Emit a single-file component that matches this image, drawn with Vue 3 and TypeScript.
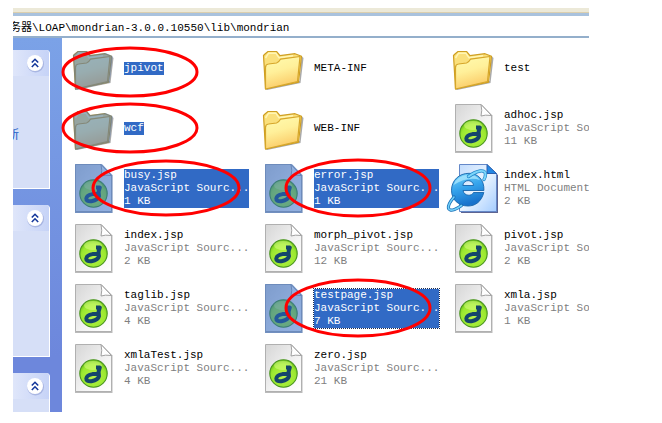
<script setup lang="ts">
type Kind = 'folder' | 'jsp' | 'html'

interface Entry {
  name: string
  kind: Kind
  type?: string
  size?: string
  selected?: boolean
  focused?: boolean
}

const path = '务器\\LOAP\\mondrian-3.0.0.10550\\lib\\mondrian'

const script = 'JavaScript Sourc...'

const entries: Entry[] = [
  { name: 'jpivot', kind: 'folder', selected: true },
  { name: 'META-INF', kind: 'folder' },
  { name: 'test', kind: 'folder' },
  { name: 'wcf', kind: 'folder', selected: true },
  { name: 'WEB-INF', kind: 'folder' },
  { name: 'adhoc.jsp', kind: 'jsp', type: script, size: '11 KB' },
  { name: 'busy.jsp', kind: 'jsp', type: script, size: '1 KB', selected: true },
  { name: 'error.jsp', kind: 'jsp', type: script, size: '1 KB', selected: true },
  { name: 'index.html', kind: 'html', type: 'HTML Document', size: '2 KB' },
  { name: 'index.jsp', kind: 'jsp', type: script, size: '2 KB' },
  { name: 'morph_pivot.jsp', kind: 'jsp', type: script, size: '12 KB' },
  { name: 'pivot.jsp', kind: 'jsp', type: script, size: '2 KB' },
  { name: 'taglib.jsp', kind: 'jsp', type: script, size: '4 KB' },
  { name: 'testpage.jsp', kind: 'jsp', type: script, size: '7 KB', selected: true, focused: true },
  { name: 'xmla.jsp', kind: 'jsp', type: script, size: '1 KB' },
  { name: 'xmlaTest.jsp', kind: 'jsp', type: script, size: '4 KB' },
  { name: 'zero.jsp', kind: 'jsp', type: script, size: '21 KB' },
]

const panels = [
  { id: 'tasks', link: '所' },
  { id: 'places', link: '' },
  { id: 'details', link: '' },
]

const marks = [
  { cx: 117, cy: 64, rx: 67, ry: 24 },
  { cx: 117, cy: 120, rx: 67, ry: 24 },
  { cx: 153, cy: 180, rx: 73, ry: 27 },
  { cx: 345, cy: 180, rx: 72, ry: 28 },
  { cx: 345, cy: 300, rx: 72, ry: 28 },
]
</script>

<template>
  <main class="explorer">
    <svg class="defs" aria-hidden="true">
      <defs>
        <linearGradient id="folderFront" x1="0" y1="0" x2="0.3" y2="1">
          <stop offset="0" stop-color="#fffbb0" />
          <stop offset="0.5" stop-color="#fff09a" />
          <stop offset="1" stop-color="#fbcc68" />
        </linearGradient>
        <linearGradient id="paper" x1="0" y1="0" x2="1" y2="1">
          <stop offset="0" stop-color="#d6d6d6" />
          <stop offset="0.6" stop-color="#f4f4f4" />
          <stop offset="1" stop-color="#ffffff" />
        </linearGradient>
        <radialGradient id="disc" cx="0.5" cy="0.6" r="0.55">
          <stop offset="0" stop-color="#b8f444" />
          <stop offset="0.8" stop-color="#9ae830" />
          <stop offset="1" stop-color="#74c820" />
        </radialGradient>
        <linearGradient id="bluePaper" x1="0" y1="0" x2="1" y2="1">
          <stop offset="0" stop-color="#c2dcfc" />
          <stop offset="0.5" stop-color="#eaf4ff" />
          <stop offset="1" stop-color="#a4ccff" />
        </linearGradient>
        <linearGradient id="globe" x1="0" y1="0" x2="0.3" y2="1">
          <stop offset="0" stop-color="#7cd6fa" />
          <stop offset="0.5" stop-color="#36a4ec" />
          <stop offset="1" stop-color="#1872cc" />
        </linearGradient>
      </defs>
    </svg>

    <div class="toolbar"></div>
    <input class="address" aria-label="Address" :value="path" spellcheck="false" />

    <div class="body">
      <aside class="sidebar">
        <section v-for="p in panels" :key="p.id" class="panel" :class="p.id">
          <header class="panel-head">
            <button class="collapse" type="button" aria-label="Collapse">
              <svg viewBox="0 0 20 20" width="20" height="20">
                <circle cx="10.500" cy="11" r="8.500" fill="#8f9fd4" opacity="0.6" />
                <circle cx="10" cy="10" r="8" fill="#fff" />
                <path d="M6.800 9.500 10 6.300l3.200 3.200M6.800 14 10 10.800l3.200 3.200" fill="none" stroke="#173a9c" stroke-width="1.600" />
              </svg>
            </button>
          </header>
          <a v-if="p.link" class="task" href="#">{{ p.link }}</a>
        </section>
      </aside>

      <ul class="files">
        <li
          v-for="e in entries"
          :key="e.name"
          class="file"
          :class="[e.kind, { selected: e.selected, focused: e.focused }]"
        >
          <svg v-if="e.kind === 'folder'" class="icon" viewBox="0 0 48 48">
            <path d="M6 44.500 8 46l33.500-7 3-25-2-2-2 25z" fill="#555" opacity="0.5" />
            <path d="M4.500 11.500 6 10 9 7.500h8.500l3.500 4.200 15-2 6.500 2.500-3 26L6.500 45z" fill="#fae07c" stroke="#cf9f22" stroke-width="1.200" stroke-linejoin="round" />
            <path d="M6.500 14 9.500 9.300h7.500l3 4.500 14-2" fill="none" stroke="#fff6b4" stroke-width="1.400" />
            <path d="M6.500 45V23.500q0-3.200 3-3.500l8-1q2-.5 4-3.800l19.500-2.700-2.500 25z" fill="url(#folderFront)" stroke="#d6a62a" stroke-width="1.200" stroke-linejoin="round" />
            <path v-if="e.selected" d="M4 11 9 7h9l3.500 4 15-2 7 3-3 26.500L6 46z" fill="#316ac5" opacity="0.5" />
          </svg>

          <svg v-else-if="e.kind === 'jsp'" class="icon" viewBox="0 0 48 48">
            <path d="M6 1h27L43.500 11.500V49H6z" fill="#777" opacity="0.5" />
            <path d="M6.500.5H32L42.500 11.500V47.500h-36z" fill="url(#paper)" stroke="#b0b0b0" />
            <path d="M32 .5q1.500 6 0 11.500 4-1.500 10.500-.5z" fill="#fff" stroke="#999" stroke-width="0.900" />
            <circle cx="24.500" cy="29.500" r="13.700" fill="url(#disc)" stroke="#4a9420" stroke-width="1.100" />
            <ellipse cx="24" cy="21.500" rx="9" ry="4.500" fill="#dcff86" opacity="0.5" />
            <path d="M27 23.500h3.800q-2 4.500-.8 8.500-.8 4-7.500 5.200-5.500.5-5.200-2.700.6-3.500 6.200-4.400 3.500-.2 6 0" fill="none" stroke="#14456b" stroke-width="4" stroke-linejoin="round" />
            <path v-if="e.selected" d="M6 0h27l10.500 11v38H6z" fill="#316ac5" opacity="0.53" />
          </svg>

          <svg v-else class="icon" viewBox="0 0 48 48">
            <path d="M12 2h27l10 9v38H12z" fill="#27306e" opacity="0.75" />
            <path d="M10.500.5H38L47.500 10v37.500h-37z" fill="url(#bluePaper)" stroke="#6488c8" />
            <path d="M38 .5V9.500h9.500z" fill="#2488e4" stroke="#2b5fae" />
            <path d="M34.800 28.500H24.500c-1.500 4-9.500 3.800-10.500-2H34.900C35.500 15.500 28.500 9.300 20 9.300 10 9.300 2.500 16.500 2.500 26.200c0 9.500 7 15.800 16.500 15.800 7.500 0 13.500-4.500 15.800-13.500zM13.800 21.500c.8-6.500 10-6.500 10.800 0z" fill="url(#globe)" stroke="#1764aa" stroke-width="0.900" fill-rule="evenodd" />
            <path d="M4.500 21Q8.500 11 19.500 10.800q7.500 0 11.500 5.200Q19 12 4.500 21z" fill="#b4ecff" opacity="0.7" />
            <path d="M5 33C-3.500 43-1.500 48 5.500 45.500Q9 44.200 12.500 41.500" fill="none" stroke="#1870b8" stroke-width="3.200" stroke-linecap="round" />
            <path d="M5 33C-3.500 43-1.500 48 5.500 45.500Q9 44.200 12.500 41.500" fill="none" stroke="#74d0f8" stroke-width="1.600" stroke-linecap="round" />
            <path d="M19.500 12.500C28 6.500 36.500 4.500 36.500 10.500Q36.500 13 35 15.500" fill="none" stroke="#2488cc" stroke-width="3.400" stroke-linecap="round" />
            <path d="M19.500 12.500C28 6.500 36.500 4.500 36.500 10.500Q36.500 13 35 15.500" fill="none" stroke="#7cd6fa" stroke-width="2" stroke-linecap="round" />
          </svg>

          <div class="label">
            <span class="name">{{ e.name }}</span>
            <span v-if="e.type" class="meta">{{ e.type }}</span>
            <span v-if="e.size" class="meta">{{ e.size }}</span>
          </div>
        </li>
      </ul>
    </div>

    <svg class="marks" width="576" height="404" aria-hidden="true">
      <ellipse v-for="(m, i) in marks" :key="i" :cx="m.cx" :cy="m.cy" :rx="m.rx" :ry="m.ry" />
    </svg>
  </main>
</template>

<style>
body {
  margin: 0;
  background: #fff;
}
</style>

<style scoped>
.explorer {
  position: relative;
  margin: 8px 73px 11px 13px;
  overflow: hidden;
  font-family: "Liberation Mono", "Noto Sans CJK SC", monospace;
  font-size: 11px;
  line-height: 13px;
  color: #000;
}

.defs {
  position: absolute;
  width: 0;
  height: 0;
}

.toolbar {
  height: 4px;
  background: #ece9d8;
  border-bottom: 1px solid #dccfae;
}

.address {
  display: block;
  box-sizing: border-box;
  width: 100%;
  height: 25px;
  margin: 0;
  padding: 0;
  border: 0;
  border-top: 3px solid #a9c2dd;
  border-bottom: 2px solid #94afcb;
  border-radius: 0;
  outline: 0;
  background: #fff;
  color: #000;
  font: inherit;
  text-indent: -3px;
}

.body {
  display: flex;
}

.sidebar {
  display: flex;
  flex-direction: column;
  gap: 16px;
  box-sizing: border-box;
  width: 49px;
  padding: 12px 12px 0 0;
  background: linear-gradient(#7ba2e7, #6d87dc 85%);
}

.panel {
  box-sizing: border-box;
  overflow: hidden;
  border: solid #fff;
  border-width: 0 1px 1px 0;
  border-radius: 0 4px 0 0;
  background: #d6dff7;
}

.tasks {
  height: 139px;
}

.places {
  height: 152px;
}

.details {
  flex: 1;
  border-bottom: 0;
}

.panel-head {
  display: flex;
  justify-content: flex-end;
  padding: 3px 4px;
  background: linear-gradient(90deg, #dfe6fa, #c6d3f7);
}

.collapse {
  display: flex;
  padding: 0;
  border: 0;
  background: none;
}

.task {
  display: block;
  margin: 54px 0 0 -6px;
  color: #215dc6;
  font-size: 12px;
  text-decoration: none;
}

.files {
  flex: 1;
  display: grid;
  grid-template-columns: repeat(3, 190px);
  grid-auto-rows: 48px;
  row-gap: 12px;
  min-width: 0;
  margin: 0;
  padding: 6px 0 20px 7px;
  overflow: hidden;
  background: #fff;
  list-style: none;
}

.file {
  display: flex;
  align-items: center;
  gap: 7px;
}

.icon {
  flex: none;
  width: 48px;
  height: 48px;
  overflow: visible;
}

.label {
  display: flex;
  flex-direction: column;
  align-items: flex-start;
  white-space: nowrap;
}

.meta {
  color: #808080;
}

.selected .name,
.selected .meta {
  color: #fff;
}

.selected.folder .name,
.selected.jsp .label {
  background: #316ac5;
}

.focused .label {
  outline: 1px dotted #1c2c50;
}

.marks {
  position: absolute;
  top: 0;
  left: 0;
  fill: none;
  stroke: #ff0000;
  stroke-width: 3;
  pointer-events: none;
}
</style>
